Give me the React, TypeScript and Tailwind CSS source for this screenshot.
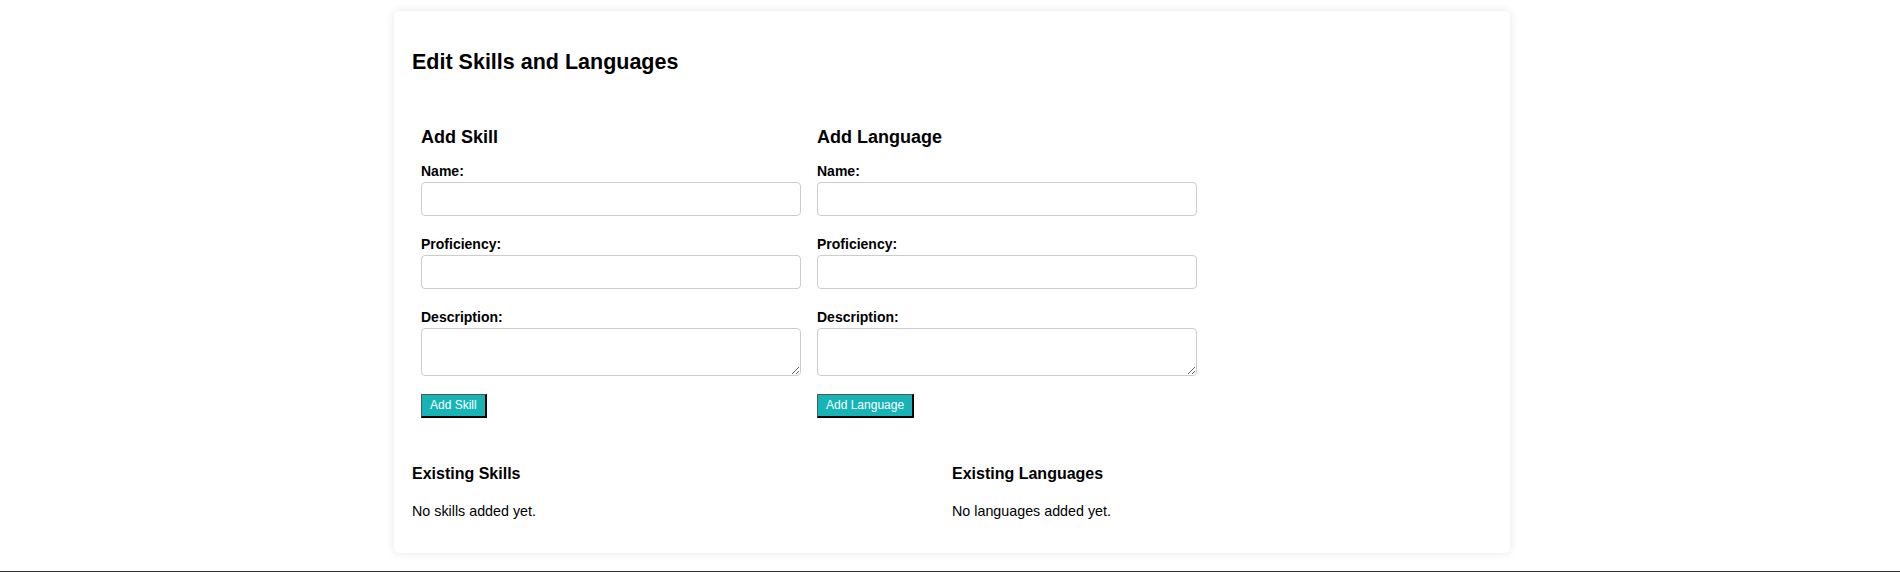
const Field = ({ label, area }: { label: string; area?: boolean }) => (
  <div className="flex flex-col">
    <label className="mb-[3.5px] text-[14px] leading-4 font-bold text-black">{label}</label>
    {area ? (
      <textarea className="h-[47.5px] w-full rounded-[4px] border border-[#cccccc] bg-white" />
    ) : (
      <input type="text" className="h-[33.5px] w-full rounded-[4px] border border-[#cccccc] bg-white" />
    )}
  </div>
);

const AddForm = ({ title, button }: { title: string; button: string }) => (
  <div className="flex w-[380px] flex-col">
    <h3 className="text-[18px] leading-[21px] font-bold text-black">{title}</h3>
    <div className="mt-[15.3px] flex flex-col gap-5">
      <Field label="Name:" />
      <Field label="Proficiency:" />
      <Field label="Description:" area />
    </div>
    <div className="mt-[16.5px]">
      <button className="border-t border-l border-r-2 border-b-2 border-t-[#555555] border-l-[#555555] border-r-black border-b-black bg-[#17b4b7] px-2 py-[3.5px] text-[12px] leading-[14px] text-white">
        {button}
      </button>
    </div>
  </div>
);

const ExistingList = ({ title, empty }: { title: string; empty: string }) => (
  <div className="flex flex-col">
    <h3 className="text-[16px] leading-[18px] font-bold text-black">{title}</h3>
    <p className="mt-[20.3px] text-[14.3px] leading-4 text-black">{empty}</p>
  </div>
);

export default function App() {
  return (
    <div className="bg-white font-['Liberation_Sans',Arial,sans-serif]">
      <div className="pt-[11px]">
        <div className="ml-[394px] w-[1116px] rounded-[5px] bg-white px-[18px] pt-[39px] pb-[34px] shadow-[0_0_10px_rgba(0,0,0,0.1)]">
          <h2 className="text-[21.5px] leading-[25px] font-bold text-black">Edit Skills and Languages</h2>

          <div className="mt-[51.6px] flex gap-4 pl-[9px]">
            <AddForm title="Add Skill" button="Add Skill" />
            <AddForm title="Add Language" button="Add Language" />
          </div>

          <div className="mt-[47px] grid grid-cols-2">
            <ExistingList title="Existing Skills" empty="No skills added yet." />
            <ExistingList title="Existing Languages" empty="No languages added yet." />
          </div>
        </div>
      </div>
      <footer className="mt-[18px] border-t border-[#333333]" />
    </div>
  );
}
